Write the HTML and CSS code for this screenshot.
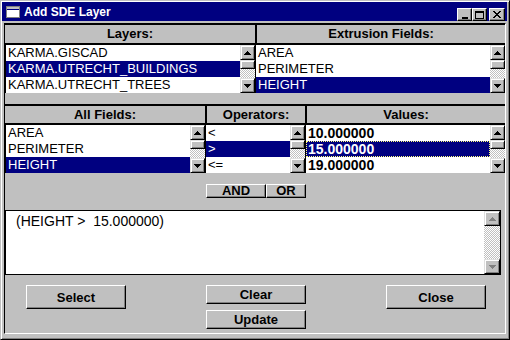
FILE: index.html
```html
<!DOCTYPE html>
<html>
<head>
<meta charset="utf-8">
<title>Add SDE Layer</title>
<link rel="stylesheet" href="styles.css">
</head>
<body>
<div class="window">
  <div class="titlebar">
    <svg class="sysicon" width="14" height="12" viewBox="0 0 14 12" shape-rendering="crispEdges">
      <rect x="0" y="0" width="14" height="12" fill="#808080"/>
      <rect x="1" y="1" width="12" height="10" fill="#fff"/>
      <rect x="1" y="1" width="12" height="2" fill="#c0c0c0"/>
      <rect x="1" y="3" width="12" height="1" fill="#000080"/>
    </svg>
    <span class="title">Add SDE Layer</span>
    <div class="tbtns">
      <span class="tbtn"><svg width="8" height="8" viewBox="0 0 8 8" shape-rendering="crispEdges"><rect x="1" y="6" width="6" height="2" fill="#000"/></svg></span>
      <span class="tbtn"><svg width="9" height="8" viewBox="0 0 9 8" shape-rendering="crispEdges"><rect x="0" y="0" width="9" height="8" fill="#000"/><rect x="1" y="2" width="7" height="5" fill="#c0c0c0"/></svg></span>
      <span class="tbtn close"><svg width="8" height="7" viewBox="0 0 8 7" shape-rendering="crispEdges"><path d="M0 0h2l2 2.5 2-2.5h2l-3 3.5 3 3.5h-2l-2-2.5-2 2.5h-2l3-3.5z" fill="#000"/></svg></span>
    </div>
  </div>

  <div class="client">
    <div class="row1">
      <div class="hdr">Layers:</div>
      <div class="hdr divl">Extrusion Fields:</div>
      <div class="list">
        <div class="items">
          <div class="item">KARMA.GISCAD</div>
          <div class="item sel">KARMA.UTRECHT_BUILDINGS</div>
          <div class="item">KARMA.UTRECHT_TREES</div>
        </div>
        <div class="sb">
          <div class="sbtn"><svg width="7" height="4" viewBox="0 0 7 4" shape-rendering="crispEdges"><path d="M3 0h1v1h1v1h1v1h1v1H0V3h1V2h1V1h1z" fill="#000"/></svg></div>
          <div class="thumb"></div>
          <div class="trough"></div>
          <div class="sbtn"><svg width="7" height="4" viewBox="0 0 7 4" shape-rendering="crispEdges"><path d="M0 0h7v1H6v1H5v1H4v1H3V3H2V2H1V1H0z" fill="#000"/></svg></div>
        </div>
      </div>
      <div class="list">
        <div class="items">
          <div class="item">AREA</div>
          <div class="item">PERIMETER</div>
          <div class="item sel">HEIGHT</div>
        </div>
        <div class="sb">
          <div class="sbtn"><svg width="7" height="4" viewBox="0 0 7 4" shape-rendering="crispEdges"><path d="M3 0h1v1h1v1h1v1h1v1H0V3h1V2h1V1h1z" fill="#000"/></svg></div>
          <div class="thumb"></div>
          <div class="trough"></div>
          <div class="sbtn"><svg width="7" height="4" viewBox="0 0 7 4" shape-rendering="crispEdges"><path d="M0 0h7v1H6v1H5v1H4v1H3V3H2V2H1V1H0z" fill="#000"/></svg></div>
        </div>
      </div>
    </div>

    <div class="row2">
      <div class="hdr">All Fields:</div>
      <div class="hdr divl">Operators:</div>
      <div class="hdr divl">Values:</div>
      <div class="list">
        <div class="items">
          <div class="item">AREA</div>
          <div class="item">PERIMETER</div>
          <div class="item sel">HEIGHT</div>
        </div>
        <div class="sb">
          <div class="sbtn"><svg width="7" height="4" viewBox="0 0 7 4" shape-rendering="crispEdges"><path d="M3 0h1v1h1v1h1v1h1v1H0V3h1V2h1V1h1z" fill="#000"/></svg></div>
          <div class="thumb"></div>
          <div class="trough"></div>
          <div class="sbtn"><svg width="7" height="4" viewBox="0 0 7 4" shape-rendering="crispEdges"><path d="M0 0h7v1H6v1H5v1H4v1H3V3H2V2H1V1H0z" fill="#000"/></svg></div>
        </div>
      </div>
      <div class="list">
        <div class="items">
          <div class="item">&lt;</div>
          <div class="item sel">&gt;</div>
          <div class="item">&lt;=</div>
        </div>
        <div class="sb">
          <div class="sbtn"><svg width="7" height="4" viewBox="0 0 7 4" shape-rendering="crispEdges"><path d="M3 0h1v1h1v1h1v1h1v1H0V3h1V2h1V1h1z" fill="#000"/></svg></div>
          <div class="thumb"></div>
          <div class="trough"></div>
          <div class="sbtn"><svg width="7" height="4" viewBox="0 0 7 4" shape-rendering="crispEdges"><path d="M0 0h7v1H6v1H5v1H4v1H3V3H2V2H1V1H0z" fill="#000"/></svg></div>
        </div>
      </div>
      <div class="list">
        <div class="items values">
          <div class="item">10.000000</div>
          <div class="item sel focus">15.000000</div>
          <div class="item">19.000000</div>
        </div>
        <div class="sb">
          <div class="sbtn"><svg width="7" height="4" viewBox="0 0 7 4" shape-rendering="crispEdges"><path d="M3 0h1v1h1v1h1v1h1v1H0V3h1V2h1V1h1z" fill="#000"/></svg></div>
          <div class="thumb"></div>
          <div class="trough"></div>
          <div class="sbtn"><svg width="7" height="4" viewBox="0 0 7 4" shape-rendering="crispEdges"><path d="M0 0h7v1H6v1H5v1H4v1H3V3H2V2H1V1H0z" fill="#000"/></svg></div>
        </div>
      </div>
    </div>

    <div class="logic">
      <button class="btn small and">AND</button>
      <button class="btn small or">OR</button>
    </div>

    <div class="query">
      <div class="qtext">(HEIGHT &gt;&nbsp; 15.000000)</div>
      <div class="sb qsb">
        <div class="sbtn"><svg width="7" height="4" viewBox="0 0 7 4" shape-rendering="crispEdges"><path d="M3 0h1v1h1v1h1v1h1v1H0V3h1V2h1V1h1z" fill="#808080"/></svg></div>
        <div class="trough"></div>
        <div class="sbtn"><svg width="7" height="4" viewBox="0 0 7 4" shape-rendering="crispEdges"><path d="M0 0h7v1H6v1H5v1H4v1H3V3H2V2H1V1H0z" fill="#808080"/></svg></div>
      </div>
    </div>

    <div class="actions">
      <button class="btn big">Select</button>
      <div class="stack">
        <button class="btn mid">Clear</button>
        <button class="btn mid">Update</button>
      </div>
      <button class="btn big">Close</button>
    </div>
  </div>
</div>
</body>
</html>
```

FILE: styles.css
```css
* { box-sizing: border-box; }

body {
  margin: 0;
  background: #c0c0c0;
  font-family: "Liberation Sans", Arial, sans-serif;
}

.window {
  width: 510px;
  height: 340px;
  border: 1px solid;
  border-color: #c0c0c0 #000 #000 #c0c0c0;
  box-shadow: inset 1px 1px #fff, inset -1px -1px #808080;
  padding: 1px;
  display: flex;
  flex-direction: column;
  background: #c0c0c0;
}

.titlebar {
  height: 19px;
  flex: none;
  margin-right: 1px;
  background: #000080;
  color: #fff;
  display: flex;
  align-items: center;
}

.sysicon { display: block; margin-left: 4px; }

.title {
  margin-left: 4px;
  font-weight: bold;
  font-size: 12px;
}

.tbtns {
  margin-left: auto;
  margin-right: 2px;
  align-self: flex-end;
  margin-bottom: 0;
  display: flex;
}

.tbtn {
  width: 15px;
  height: 13px;
  background: #c0c0c0;
  border: 1px solid;
  border-color: #fff #000 #000 #fff;
  box-shadow: inset -1px -1px #808080;
  display: flex;
  align-items: center;
  justify-content: center;
}
.tbtn svg { display: block; }
.tbtn.close { width: 16px; margin-left: 2px; }

.client {
  flex: 1;
  margin: 2px 2px 4px 2px;
  border: 1px solid;
  border-color: #000 #fff #fff #000;
  display: flex;
  flex-direction: column;
}

.row1 {
  display: grid;
  grid-template-columns: 250px 250px;
}

.row2 {
  display: grid;
  grid-template-columns: 200px 100px 200px;
  margin-top: 11px;
}

.hdr {
  height: 21px;
  border-top: 1px solid #000;
  border-bottom: 2px solid #000;
  text-align: center;
  font-weight: bold;
  font-size: 13px;
  line-height: 18px;
  color: #000;
}
.row2 .hdr {
  border-top-width: 2px;
  line-height: 17px;
}
.hdr.divl { border-left: 2px solid #000; }

.list {
  display: flex;
  height: 48px;
  border-left: 1px solid #000;
  background: #fff;
}

.items { flex: 1; min-width: 0; }

.item {
  height: 16px;
  line-height: 16px;
  font-size: 13px;
  padding-left: 2px;
  white-space: nowrap;
  overflow: hidden;
  color: #000;
}
.item.sel { background: #000080; color: #fff; }
.values .item { font-weight: bold; font-size: 14px; }
.item.focus { outline: 1px dotted #ffff80; outline-offset: -1px; }

.sb {
  width: 15px;
  flex: none;
  display: flex;
  flex-direction: column;
  background: #c0c0c0;
}

.sbtn, .thumb {
  background: #c0c0c0;
  border: 1px solid;
  border-color: #dfdfdf #000 #000 #dfdfdf;
  box-shadow: inset 1px 1px #fff, inset -1px -1px #808080;
}
.sbtn {
  height: 15px;
  flex: none;
  display: flex;
  align-items: center;
  justify-content: center;
}
.sbtn svg { display: block; }
.thumb { height: 9px; flex: none; }

.trough {
  flex: 1;
  background: repeating-conic-gradient(#c0c0c0 0 25%, #fff 0 50%) 0 0 / 2px 2px;
}

.logic {
  display: flex;
  margin-top: 11px;
  padding-left: 201px;
}

.btn {
  margin: 0;
  padding: 0;
  background: #c0c0c0;
  border: 1px solid;
  border-color: #fff #000 #000 #fff;
  box-shadow: inset -1px -1px #808080;
  font-family: "Liberation Sans", Arial, sans-serif;
  font-weight: bold;
  font-size: 13px;
  color: #000;
  display: flex;
  align-items: center;
  justify-content: center;
}
.btn.small { height: 14px; line-height: 12px; }
.btn.and { width: 60px; }
.btn.or { width: 40px; }
.btn.big { width: 100px; height: 24px; }
.btn.mid { width: 100px; height: 19px; }

.query {
  height: 65px;
  margin: 12px 4px 0 0;
  border: 1px solid #000;
  background: #fff;
  display: flex;
}

.qtext {
  flex: 1;
  padding: 2px 0 0 10px;
  font-size: 14px;
  line-height: 16px;
  color: #000;
  white-space: pre;
}

.qsb { width: 16px; }

.actions {
  display: flex;
  align-items: flex-start;
  gap: 80px;
  margin-top: 10px;
  padding-left: 21px;
}

.stack {
  display: flex;
  flex-direction: column;
  gap: 6px;
}
```
